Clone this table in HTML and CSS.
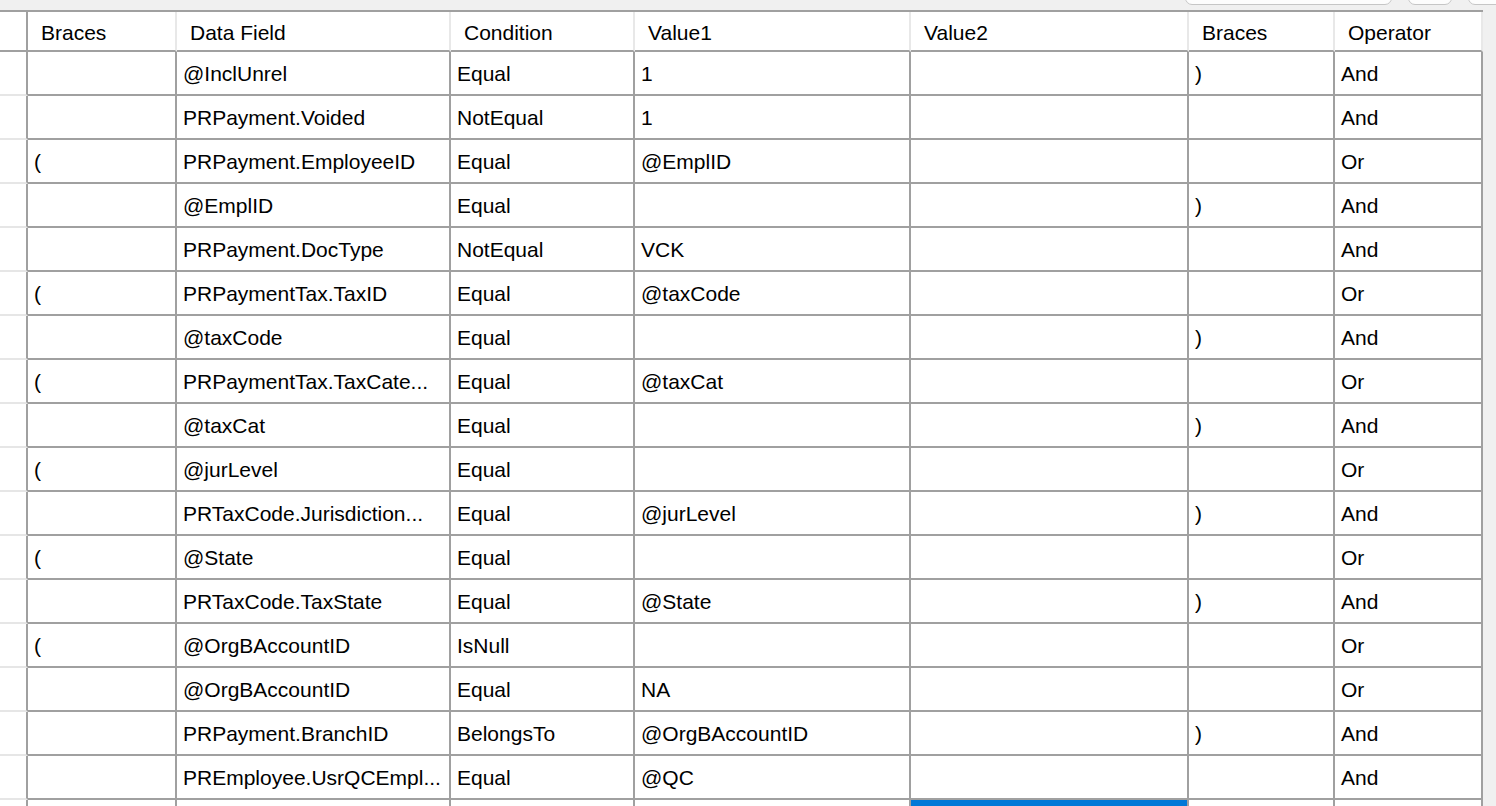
FILE: index.html
```html
<!DOCTYPE html>
<html>
<head>
<meta charset="utf-8">
<link rel="stylesheet" href="styles.css">
</head>
<body>
<div class="toolbar">
  <div class="tb-btn wide"></div>
  <div class="tb-btn small"></div>
  <div class="tb-btn tail"></div>
</div>
<div class="grid">
  <div class="gut hgut"></div>
  <div class="hcell">Braces</div>
  <div class="hcell">Data Field</div>
  <div class="hcell">Condition</div>
  <div class="hcell">Value1</div>
  <div class="hcell">Value2</div>
  <div class="hcell">Braces</div>
  <div class="hcell">Operator</div>

  <div class="gut"></div><div class="cell"></div><div class="cell">@InclUnrel</div><div class="cell">Equal</div><div class="cell">1</div><div class="cell"></div><div class="cell">)</div><div class="cell">And</div>
  <div class="gut"></div><div class="cell"></div><div class="cell">PRPayment.Voided</div><div class="cell">NotEqual</div><div class="cell">1</div><div class="cell"></div><div class="cell"></div><div class="cell">And</div>
  <div class="gut"></div><div class="cell">(</div><div class="cell">PRPayment.EmployeeID</div><div class="cell">Equal</div><div class="cell">@EmplID</div><div class="cell"></div><div class="cell"></div><div class="cell">Or</div>
  <div class="gut"></div><div class="cell"></div><div class="cell">@EmplID</div><div class="cell">Equal</div><div class="cell"></div><div class="cell"></div><div class="cell">)</div><div class="cell">And</div>
  <div class="gut"></div><div class="cell"></div><div class="cell">PRPayment.DocType</div><div class="cell">NotEqual</div><div class="cell">VCK</div><div class="cell"></div><div class="cell"></div><div class="cell">And</div>
  <div class="gut"></div><div class="cell">(</div><div class="cell">PRPaymentTax.TaxID</div><div class="cell">Equal</div><div class="cell">@taxCode</div><div class="cell"></div><div class="cell"></div><div class="cell">Or</div>
  <div class="gut"></div><div class="cell"></div><div class="cell">@taxCode</div><div class="cell">Equal</div><div class="cell"></div><div class="cell"></div><div class="cell">)</div><div class="cell">And</div>
  <div class="gut"></div><div class="cell">(</div><div class="cell">PRPaymentTax.TaxCate...</div><div class="cell">Equal</div><div class="cell">@taxCat</div><div class="cell"></div><div class="cell"></div><div class="cell">Or</div>
  <div class="gut"></div><div class="cell"></div><div class="cell">@taxCat</div><div class="cell">Equal</div><div class="cell"></div><div class="cell"></div><div class="cell">)</div><div class="cell">And</div>
  <div class="gut"></div><div class="cell">(</div><div class="cell">@jurLevel</div><div class="cell">Equal</div><div class="cell"></div><div class="cell"></div><div class="cell"></div><div class="cell">Or</div>
  <div class="gut"></div><div class="cell"></div><div class="cell">PRTaxCode.Jurisdiction...</div><div class="cell">Equal</div><div class="cell">@jurLevel</div><div class="cell"></div><div class="cell">)</div><div class="cell">And</div>
  <div class="gut"></div><div class="cell">(</div><div class="cell">@State</div><div class="cell">Equal</div><div class="cell"></div><div class="cell"></div><div class="cell"></div><div class="cell">Or</div>
  <div class="gut"></div><div class="cell"></div><div class="cell">PRTaxCode.TaxState</div><div class="cell">Equal</div><div class="cell">@State</div><div class="cell"></div><div class="cell">)</div><div class="cell">And</div>
  <div class="gut"></div><div class="cell">(</div><div class="cell">@OrgBAccountID</div><div class="cell">IsNull</div><div class="cell"></div><div class="cell"></div><div class="cell"></div><div class="cell">Or</div>
  <div class="gut"></div><div class="cell"></div><div class="cell">@OrgBAccountID</div><div class="cell">Equal</div><div class="cell">NA</div><div class="cell"></div><div class="cell"></div><div class="cell">Or</div>
  <div class="gut"></div><div class="cell"></div><div class="cell">PRPayment.BranchID</div><div class="cell">BelongsTo</div><div class="cell">@OrgBAccountID</div><div class="cell"></div><div class="cell">)</div><div class="cell">And</div>
  <div class="gut"></div><div class="cell"></div><div class="cell">PREmployee.UsrQCEmpl...</div><div class="cell">Equal</div><div class="cell">@QC</div><div class="cell"></div><div class="cell"></div><div class="cell">And</div>
  <div class="gut"></div><div class="cell"></div><div class="cell"></div><div class="cell"></div><div class="cell"></div><div class="cell sel"></div><div class="cell"></div><div class="cell"></div>
</div>
</body>
</html>
```

FILE: styles.css
```css
html, body {
  margin: 0;
  padding: 0;
}
body {
  background: #f0f0f0;
  font-family: "Liberation Sans", Arial, sans-serif;
  font-size: 21px;
  color: #000;
  width: 1496px;
  height: 806px;
  overflow: hidden;
}
.toolbar {
  height: 10px;
  overflow: hidden;
  display: flex;
  align-items: flex-end;
  padding-left: 1185px;
  gap: 16px;
  box-sizing: border-box;
  padding-bottom: 5px;
}
.tb-btn {
  height: 30px;
  flex: none;
  background: #fdfdfd;
  border: 1px solid #c6c6c6;
  border-radius: 7px;
  box-sizing: border-box;
}
.tb-btn.wide { width: 207px; }
.tb-btn.small { width: 44px; }
.tb-btn.tail { width: 60px; }
.grid {
  display: grid;
  grid-template-columns: 28px 149px 274px 184px 276px 278px 146px 148px;
  grid-auto-rows: 44px;
  grid-template-rows: 40px;
  width: 1483px;
  background: #fff;
  border-top: 2px solid #a0a0a0;
}
.hcell, .cell, .gut {
  box-sizing: border-box;
  display: flex;
  align-items: center;
  white-space: nowrap;
  overflow: hidden;
}
.hcell {
  border-right: 2px solid #e8e8e8;
  border-bottom: 2px solid #a0a0a0;
  padding-left: 13px;
  padding-top: 3px;
}
.hcell:last-child {
  border-right: 2px solid #a0a0a0;
}
.gut {
  border-right: 2px solid #a0a0a0;
  border-bottom: 2px solid #e6e6e6;
}
.gut.hgut {
  border-bottom: 2px solid #a0a0a0;
}
.cell {
  border-right: 2px solid #a0a0a0;
  border-bottom: 2px solid #a0a0a0;
  padding-left: 6px;
  padding-top: 2px;
}
.cell.sel {
  background: #0078d7;
}
```
